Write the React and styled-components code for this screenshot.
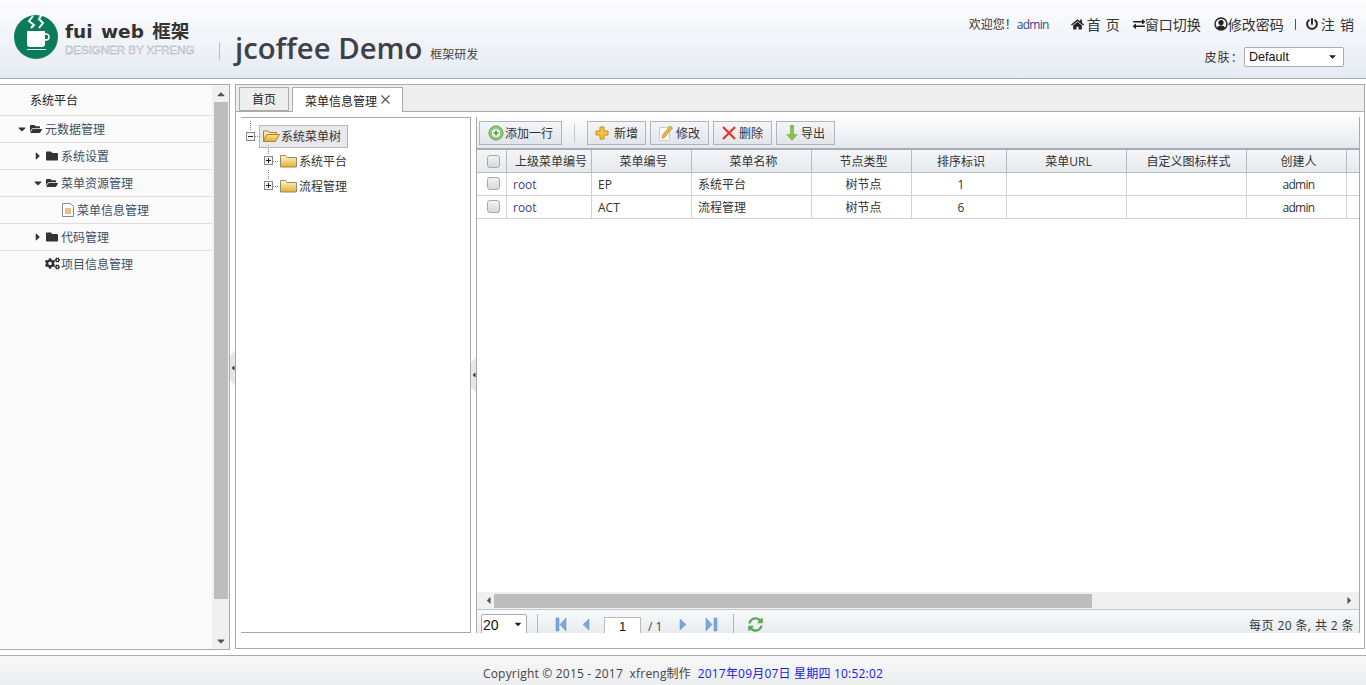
import React from "react";
import styled, { createGlobalStyle } from "styled-components";
import { FaHome, FaExchangeAlt, FaPowerOff, FaFolder, FaFolderOpen, FaCogs, FaCaretDown, FaCaretRight, FaCaretUp, FaCaretLeft, FaSyncAlt } from "react-icons/fa";

const columns = [
  { title: "上级菜单编号", width: 85, align: "left" },
  { title: "菜单编号", width: 100, align: "left" },
  { title: "菜单名称", width: 120, align: "left" },
  { title: "节点类型", width: 100, align: "center" },
  { title: "排序标识", width: 95, align: "center" },
  { title: "菜单URL", width: 120, align: "center" },
  { title: "自定义图标样式", width: 120, align: "center" },
  { title: "创建人", width: 100, align: "center" },
];

const rows = [
  ["root", "EP", "系统平台", "树节点", "1", "", "", "admin"],
  ["root", "ACT", "流程管理", "树节点", "6", "", "", "admin"],
];

const Logo = () => (
  <svg width="46" height="46" viewBox="0 0 46 46">
    <circle cx="22" cy="23" r="22" fill="#0b7c58" />
    <path d="M13 17h18v13a3 3 0 0 1-3 3H16a3 3 0 0 1-3-3Z" fill="#fff" />
    <circle cx="32" cy="23" r="3" fill="none" stroke="#fff" strokeWidth="1.5" />
    <path d="M13 35h19v1H13Z" fill="#dff" />
    <path d="M17 14l3-3-5-4 4-5M25 14l4-5-4-4 3-5" fill="none" stroke="#fff" strokeWidth="2" />
  </svg>
);

const UserRing = () => (
  <svg width="14" height="14" viewBox="0 0 14 14">
    <circle cx="7" cy="7" r="6" fill="none" stroke="#222" strokeWidth="1.4" />
    <circle cx="7" cy="5.600" r="2.600" fill="#222" />
    <path d="M2.800 11c1-2 2.400-2.600 4.200-2.600s3.200.6 4.200 2.600a6 6 0 0 1-8.400 0Z" fill="#222" />
  </svg>
);

const CloseMark = () => (
  <svg width="9" height="9" viewBox="0 0 9 9">
    <path d="M.5.5l8 8M8.500.5l-8 8" stroke="#555" strokeWidth="1.100" />
  </svg>
);

const DocIcon = () => (
  <svg width="12" height="14" viewBox="0 0 12 14">
    <path d="M.5.5h8l3 3v10H.5Z" fill="#fff" stroke="#888" />
    <path d="M3 6h6M3 8h6M3 10h6" stroke="#e07a10" />
  </svg>
);

const AddCircle = () => (
  <svg width="16" height="16" viewBox="0 0 16 16">
    <circle cx="8" cy="8" r="7" fill="#8ccb72" stroke="#5fa350" />
    <circle cx="8" cy="8" r="4" fill="#fff" />
    <path d="M8 5.500v5M5.500 8h5" stroke="#4f9c3f" strokeWidth="1.600" />
  </svg>
);

const PlusIcon = () => (
  <svg width="14" height="14" viewBox="0 0 14 14">
    <path d="M5 1h4v4h4v4H9v4H5V9H1V5h4Z" fill="#f6c33d" stroke="#c98a1a" />
  </svg>
);

const PencilIcon = () => (
  <svg width="14" height="16" viewBox="0 0 14 16">
    <path d="M.5 2.500h10v13H.5Z" fill="#fff" stroke="#ccc" />
    <path d="M11 1l2.500 2L6 12l-3 1.500L3.500 10Z" fill="#eeb54a" stroke="#b98426" strokeWidth=".7" />
  </svg>
);

const CrossIcon = () => (
  <svg width="14" height="14" viewBox="0 0 14 14">
    <path d="M1 1l12 12M13 1L1 13" stroke="#e2352a" strokeWidth="2.200" />
  </svg>
);

const DownIcon = () => (
  <svg width="12" height="16" viewBox="0 0 12 16">
    <path d="M4 0h4v9h4l-6 7-6-7h4Z" fill="#8cbc52" />
  </svg>
);

const YellowFolder = ({ open }) => (
  <svg width="17" height="14" viewBox="0 0 17 14">
    <defs>
      <linearGradient id="fold" x1="0" y1="0" x2="0" y2="1">
        <stop offset="0" stopColor="#fff6cc" />
        <stop offset="1" stopColor="#e8ad2c" />
      </linearGradient>
    </defs>
    {open ? (
      <path d="M.5 12.500V2h5l1 1.500h7v2H4L.5 12.500h12L16.500 5.500H4" fill="url(#fold)" stroke="#a8842f" />
    ) : (
      <path d="M.5 13V1.500h5l1.500 2h9.500V13Z" fill="url(#fold)" stroke="#8f8a70" />
    )}
  </svg>
);

const PagerGlyph = ({ kind }) => {
  const paths = {
    first: "M1 1h3v13H1ZM11 1v13L5 7.500Z",
    prev: "M9 2v11L3 7.500Z",
    next: "M4 2v11l6-5.500Z",
    last: "M1 1v13l6-6.500ZM9 1h3v13H9Z",
  };
  return (
    <svg width="13" height="15" viewBox="0 0 13 15">
      <path d={paths[kind]} fill="#7da5dc" stroke="#5f8ccb" strokeWidth=".5" />
    </svg>
  );
};

const App = () => {
  return (
    <Page>
      <GlobalStyle />
      <Header>
        <Brand>
          <LogoMark>
            <Logo />
          </LogoMark>
          <LogoWords>
            <LogoName>fui web 框架</LogoName>
            <LogoSlogan>DESIGNER BY XFRENG</LogoSlogan>
          </LogoWords>
          <BrandRule />
          <Title>jcoffee Demo</Title>
          <SubTitle>框架研发</SubTitle>
        </Brand>
        <UserBox>
          <UserLinks>
            <Welcome>
              欢迎您！<b>admin</b>
            </Welcome>
            <UserLink $left={22} $gap={3}><FaHome size={13} />首 页</UserLink>
            <UserLink $left={13} $gap={0}><FaExchangeAlt size={12} />窗口切换</UserLink>
            <UserLink $left={13} $gap={0}><UserRing />修改密码</UserLink>
            <Pipe />
            <UserLink $left={0} $gap={3}><FaPowerOff size={12} />注 销</UserLink>
          </UserLinks>
          <SkinRow>
            皮肤：
            <SelectBox $width={100}>
              <select defaultValue="Default">
                <option>Default</option>
              </select>
              <FaCaretDown size={11} />
            </SelectBox>
          </SkinRow>
        </UserBox>
      </Header>

      <Main>
        <Sidebar>
          <MenuList>
            <MenuRow $top $indent={30}>系统平台</MenuRow>
            <MenuRow $indent={16}><Caret><FaCaretDown size={12} /></Caret><FaFolderOpen size={12} />元数据管理</MenuRow>
            <MenuRow $indent={32}><Caret><FaCaretRight size={12} /></Caret><FaFolder size={12} />系统设置</MenuRow>
            <MenuRow $indent={32}><Caret><FaCaretDown size={12} /></Caret><FaFolderOpen size={12} />菜单资源管理</MenuRow>
            <MenuRow $indent={62}><DocIcon />菜单信息管理</MenuRow>
            <MenuRow $indent={32}><Caret><FaCaretRight size={12} /></Caret><FaFolder size={12} />代码管理</MenuRow>
            <MenuRow $indent={45} $plain><FaCogs size={15} />项目信息管理</MenuRow>
          </MenuList>
          <VScroll>
            <FaCaretUp size={12} />
            <VThumb />
            <FaCaretDown size={12} />
          </VScroll>
        </Sidebar>

        <Gutter>
          <Handle><FaCaretLeft size={8} /></Handle>
        </Gutter>

        <Content>
          <TabStrip>
            <Tab>首页</Tab>
            <Tab $active>菜单信息管理<CloseMark /></Tab>
          </TabStrip>
          <TabBody>
            <TreePanel>
              <TreeRoot>
                <Expander />
                <TreeSelected><YellowFolder open />系统菜单树</TreeSelected>
              </TreeRoot>
              <TreeNode><Expander $plus /><YellowFolder />系统平台</TreeNode>
              <TreeNode><Expander $plus /><YellowFolder />流程管理</TreeNode>
            </TreePanel>
            <SplitGap>
              <Handle><FaCaretLeft size={8} /></Handle>
            </SplitGap>
            <GridPanel>
              <Toolbar>
                <ToolButton $width={83} $gap={1}><AddCircle />添加一行</ToolButton>
                <ToolRule />
                <ToolButton $width={59} $gap={5}><PlusIcon />新增</ToolButton>
                <ToolButton $width={59}><PencilIcon />修改</ToolButton>
                <ToolButton $width={59}><CrossIcon />删除</ToolButton>
                <ToolButton $width={59}><DownIcon />导出</ToolButton>
              </Toolbar>
              <GridArea>
                <Table>
                  <colgroup>
                    <col style={{ width: 30 }} />
                    {columns.map((c) => (
                      <col key={c.title} style={{ width: c.width }} />
                    ))}
                    <col />
                  </colgroup>
                  <thead>
                    <tr>
                      <HeadCell $box><Check /></HeadCell>
                      {columns.map((c) => (
                        <HeadCell key={c.title}>{c.title}</HeadCell>
                      ))}
                      <HeadCell />
                    </tr>
                  </thead>
                  <tbody>
                    {rows.map((row) => (
                      <tr key={row[1]}>
                        <BodyCell $align="center" $box><Check /></BodyCell>
                        {row.map((value, i) => (
                          <BodyCell key={i} $align={columns[i].align} $link={i === 0} $tight={value === "admin"}>{value}</BodyCell>
                        ))}
                        <BodyCell />
                      </tr>
                    ))}
                  </tbody>
                </Table>
              </GridArea>
              <HScroll>
                <FaCaretLeft size={11} />
                <HTrack><HThumb /></HTrack>
                <FaCaretRight size={11} />
              </HScroll>
              <Pager>
                <SelectBox $width={46} $pager>
                  <select defaultValue="20">
                    <option>20</option>
                  </select>
                  <FaCaretDown size={10} />
                </SelectBox>
                <PagerRule />
                <PagerButton $left={7}><PagerGlyph kind="first" /></PagerButton>
                <PagerButton $left={12}><PagerGlyph kind="prev" /></PagerButton>
                <PageInput readOnly value="1" />
                <PageTotal>/ 1</PageTotal>
                <PagerButton $left={0}><PagerGlyph kind="next" /></PagerButton>
                <PagerButton $left={16}><PagerGlyph kind="last" /></PagerButton>
                <PagerRule $left={15} />
                <Refresh><FaSyncAlt size={15} /></Refresh>
                <PagerInfo>每页 20 条, 共 2 条</PagerInfo>
              </Pager>
            </GridPanel>
          </TabBody>
        </Content>
      </Main>

      <Footer>
        Copyright © 2015 - 2017&nbsp; xfreng制作&nbsp; <Clock>2017年09月07日 星期四 10:52:02</Clock>
      </Footer>
    </Page>
  );
};

export default App;

const fonts = `"Open Sans", "Noto Sans CJK SC", sans-serif`;

const GlobalStyle = createGlobalStyle`
  html, body {
    margin: 0;
    padding: 0;
    height: 100%;
    overflow: hidden;
    background: #fff;
  }
  * {
    box-sizing: border-box;
  }
`;

const Page = styled.div`
  display: flex;
  flex-direction: column;
  height: 685px;
  font-family: ${fonts};
  font-size: 12px;
  color: #444;
`;

const Header = styled.header`
  display: flex;
  justify-content: space-between;
  flex: 0 0 79px;
  border-bottom: 1px solid #aaa;
  background: linear-gradient(#fcfcfd, #e6ebf3);
`;

const Brand = styled.div`
  display: flex;
  align-items: flex-start;
  padding: 14px 0 0 14px;
`;

const LogoMark = styled.div`
  width: 46px;
  height: 46px;
`;

const LogoWords = styled.div`
  display: flex;
  flex-direction: column;
  margin: 6px 0 0 5px;
  width: 130px;
`;

const LogoName = styled.div`
  font-family: "DejaVu Sans", "Noto Sans CJK SC", sans-serif;
  font-size: 18.500px;
  line-height: 24px;
  font-weight: 700;
  color: #333;
  white-space: nowrap;
  word-spacing: 2px;
`;

const LogoSlogan = styled.div`
  font-family: "Liberation Sans", sans-serif;
  font-size: 11.500px;
  line-height: 12px;
  color: #f2f3f6;
  -webkit-text-stroke: 0.4px #a0a0a0;
  white-space: nowrap;
`;

const BrandRule = styled.div`
  width: 1px;
  height: 18px;
  margin: 28px 15px 0 24px;
  background: #bbb;
`;

const Title = styled.div`
  font-size: 29.300px;
  line-height: 40px;
  font-weight: 600;
  color: #404048;
  margin-top: 14px;
  white-space: nowrap;
`;

const SubTitle = styled.div`
  font-size: 12px;
  line-height: 16px;
  margin: 33px 0 0 8px;
  color: #444;
  white-space: nowrap;
`;

const UserBox = styled.div`
  display: flex;
  flex-direction: column;
  align-items: flex-end;
  padding: 14px 12px 0 0;
`;

const UserLinks = styled.div`
  display: flex;
  align-items: center;
  height: 20px;
`;

const Welcome = styled.span`
  font-size: 12px;
  color: #333;

  b {
    font-weight: 400;
    letter-spacing: -0.7px;
    color: #33468a;
  }
`;

const UserLink = styled.span`
  display: inline-flex;
  align-items: center;
  gap: ${(p) => p.$gap}px;
  margin-left: ${(p) => p.$left}px;
  font-size: 14px;
  word-spacing: 1.500px;
  color: #333;
  svg {
    color: #222;
    flex: none;
  }
`;

const Pipe = styled.span`
  width: 1px;
  height: 11px;
  margin: 0 10px 0 11px;
  background: #8a2a7a;
`;

const SkinRow = styled.div`
  display: flex;
  align-items: center;
  margin: 13px 10px 0 0;
  height: 20px;
  color: #333;
  font-size: 12px;
  letter-spacing: 1.200px;
`;

const SelectBox = styled.div`
  position: relative;
  width: ${(p) => p.$width}px;
  height: ${(p) => (p.$pager ? 30 : 20)}px;
  flex: none;
  letter-spacing: 0;

  select {
    appearance: none;
    width: 100%;
    height: 100%;
    padding: ${(p) => (p.$pager ? "0 0 8px 1px" : "0 0 0 4px")};
    border: 1px solid #aaa;
    border-radius: 2px;
    background: #fff;
    font-family: "Liberation Sans", sans-serif;
    font-size: ${(p) => (p.$pager ? 14 : 12.6)}px;
    color: #111;
    outline: none;
  }

  svg {
    position: absolute;
    right: ${(p) => (p.$pager ? 4 : 6)}px;
    top: ${(p) => (p.$pager ? 5 : 4)}px;
    color: #222;
  }
`;

const Main = styled.main`
  display: flex;
  flex: 1;
  min-height: 0;
  margin: 5px 0 5px;
`;

const Sidebar = styled.aside`
  display: flex;
  flex: 0 0 230px;
  border-top: 1px solid #aaa;
  border-right: 1px solid #aaa;
  border-bottom: 1px solid #aaa;
  background: #fafafa;
`;

const MenuList = styled.nav`
  flex: 1;
`;

const MenuRow = styled.div`
  display: flex;
  align-items: center;
  gap: ${(p) => (p.$plain ? 1 : 3)}px;
  height: ${(p) => (p.$top ? 31 : 27)}px;
  padding-left: ${(p) => p.$indent}px;
  padding-bottom: ${(p) => (p.$plain ? 2 : 0)}px;
  border-bottom: ${(p) => (p.$plain ? "none" : "1px solid #ddd")};
  color: ${(p) => (p.$top ? "#222" : "#3d4f63")};
  svg {
    color: #333;
    flex: none;
  }
`;

const Caret = styled.span`
  display: inline-flex;
  width: 11px;
`;

const VScroll = styled.div`
  display: flex;
  flex-direction: column;
  align-items: center;
  justify-content: space-between;
  flex: 0 0 17px;
  padding: 3px 0 2px;
  background: #f0f0f0;
  svg {
    color: #555;
    flex: none;
  }
`;

const VThumb = styled.div`
  width: 14px;
  flex: 1;
  margin: 2px 0 36px;
  background: #bdbdbd;
`;

const Gutter = styled.div`
  position: relative;
  flex: 0 0 5px;
`;

const Handle = styled.div`
  position: absolute;
  top: 266px;
  left: 0;
  display: flex;
  align-items: center;
  justify-content: center;
  width: 5px;
  height: 36px;
  background: #e6e6e6;
  clip-path: polygon(0 6px, 100% 0, 100% 100%, 0 30px);
  svg {
    color: #333;
    flex: none;
  }
`;

const Content = styled.section`
  display: flex;
  flex-direction: column;
  flex: 1;
  min-width: 0;
  margin-right: 1px;
  margin-bottom: 1px;
  border: 1px solid #aaa;
  background: #fff;
`;

const TabStrip = styled.div`
  display: flex;
  align-items: flex-end;
  flex: 0 0 27px;
  gap: 3px;
  padding-left: 3px;
  border-bottom: 1px solid #aaa;
  background: #eee;
`;

const Tab = styled.div`
  display: flex;
  align-items: ${(p) => (p.$active ? "flex-start" : "center")};
  justify-content: center;
  gap: 4px;
  width: ${(p) => (p.$active ? 111 : 50)}px;
  height: ${(p) => (p.$active ? 25 : 24)}px;
  padding-top: ${(p) => (p.$active ? 5 : 1)}px;
  margin-bottom: ${(p) => (p.$active ? -1 : 0)}px;
  border: 1px solid #aaa;
  border-bottom: ${(p) => (p.$active ? "none" : "1px solid #aaa")};
  background: ${(p) => (p.$active ? "#fff" : "#eee")};
  color: #222;
  line-height: 18px;
  svg {
    margin-top: 2px;
  }
`;

const TabBody = styled.div`
  display: flex;
  flex: 1;
  min-height: 0;
  padding: 5px 4px 15px 5px;
`;

const TreePanel = styled.div`
  flex: 0 0 230px;
  padding-top: 6px;
  border-top: 1px solid #aaa;
  border-right: 1px solid #aaa;
  border-bottom: 1px solid #aaa;
  background: #fff;
  color: #333;
`;

const Dots = `
  position: relative;

  &::before {
    content: "";
    position: absolute;
    top: -3px;
    height: 9px;
    border-left: 1px dotted #888;
  }
  &::after {
    content: "";
    position: absolute;
    top: 50%;
    width: 5px;
    border-top: 1px dotted #888;
  }
`;

const TreeRoot = styled.div`
  ${Dots}
  display: flex;
  align-items: center;
  gap: 4px;
  height: 24px;
  padding-left: 5px;

  &::before {
    left: 9px;
  }
  &::after {
    left: 14px;
  }
`;

const TreeSelected = styled.div`
  display: flex;
  align-items: center;
  gap: 1px;
  width: 89px;
  height: 23px;
  padding-left: 3px;
  border: 1px solid #b3b6bc;
  background: #e8e9ec;
`;

const TreeNode = styled.div`
  ${Dots}
  display: flex;
  align-items: center;
  gap: 2px;
  height: 25px;
  padding-left: 23px;

  &::before {
    left: 27px;
  }
  &::after {
    left: 32px;
  }
`;

const Expander = styled.span`
  position: relative;
  display: inline-block;
  flex: none;
  width: 9px;
  height: 9px;
  margin-right: ${(p) => (p.$plus ? 5 : 0)}px;
  border: 1px solid #888;
  background: #f4f4f4;

  &::before {
    content: "";
    position: absolute;
    left: 1px;
    top: 3px;
    width: 5px;
    height: 1px;
    background: #222;
  }
  &::after {
    content: "";
    display: ${(p) => (p.$plus ? "block" : "none")};
    position: absolute;
    left: 3px;
    top: 1px;
    width: 1px;
    height: 5px;
    background: #222;
  }
`;

const SplitGap = styled.div`
  position: relative;
  flex: 0 0 5px;

  ${Handle} {
    top: 240px;
  }
`;

const GridPanel = styled.div`
  display: flex;
  flex-direction: column;
  flex: 1;
  min-width: 0;
  overflow: hidden;
  border-left: 1px solid #aaa;
  border-right: 1px solid #aaa;
`;

const Toolbar = styled.div`
  display: flex;
  align-items: center;
  gap: 4px;
  flex: 0 0 33px;
  padding: 1px 0 0 2px;
  border-bottom: 2px solid #a8adb5;
  background: linear-gradient(#fdfdfd, #e4e7ed);
`;

const ToolButton = styled.div`
  display: flex;
  align-items: center;
  justify-content: center;
  gap: ${(p) => p.$gap ?? 3}px;
  width: ${(p) => p.$width}px;
  height: 24px;
  border: 1px solid #b1b4ba;
  background: linear-gradient(#f4f5f7, #e1e4ea);
  color: #333;
`;

const ToolRule = styled.div`
  width: 1px;
  height: 18px;
  margin: 0 8px;
  background: #c4c6ca;
`;

const GridArea = styled.div`
  flex: 1;
  min-height: 0;
  background: #fff;
`;

const Table = styled.table`
  width: 100%;
  table-layout: fixed;
  border-collapse: separate;
  border-spacing: 0;
`;

const HeadCell = styled.th`
  height: 23px;
  padding: ${(p) => (p.$box ? "2px 0 0" : "0 0 0 4px")};
  border-right: 1px solid #b5b9c0;
  border-bottom: 1px solid #b5b9c0;
  background: linear-gradient(#f4f5f7, #e6e9ee);
  font-weight: 400;
  font-size: 12px;
  color: #333;
  text-align: center;
  white-space: nowrap;
  &:last-child {
    border-right: none;
  }
`;

const BodyCell = styled.td`
  height: 23px;
  padding: ${(p) => (p.$box ? "0" : p.$align === "left" ? "0 0 0 6px" : "0 0 0 4px")};
  border-right: 1px solid #d2d2d2;
  border-bottom: 1px solid #d2d2d2;
  text-align: ${(p) => p.$align};
  color: ${(p) => (p.$link ? "#3b3f86" : "#333")};
  font-size: 12px;
  letter-spacing: ${(p) => (p.$tight ? "-0.7px" : "0")};
  &:last-child {
    border-right: none;
  }
`;

const Check = styled.span`
  display: inline-block;
  width: 13px;
  height: 13px;
  margin: 0 0 3px 4px;
  vertical-align: middle;
  border: 1px solid #a8a8a8;
  border-radius: 3px;
  background: linear-gradient(#f3f3f3, #d8d8d8);
`;

const HScroll = styled.div`
  display: flex;
  align-items: center;
  flex: 0 0 18px;
  padding: 0 4px 0 6px;
  border-bottom: 1px solid #c4c4c4;
  background: #f0f0f0;
  svg {
    color: #555;
    flex: none;
  }
`;

const HTrack = styled.div`
  flex: 1;
  padding: 0 252px 0 0;
`;

const HThumb = styled.div`
  height: 14px;
  background: #bdbdbd;
`;

const Pager = styled.div`
  display: flex;
  align-items: flex-start;
  flex: 0 0 23px;
  overflow: hidden;
  padding: 4px 5px 0 4px;
  background: linear-gradient(#f8fafb, #e8ecef);
`;

const PagerRule = styled.div`
  flex: none;
  width: 1px;
  height: 20px;
  margin: 0 10px 0 ${(p) => p.$left ?? 10}px;
  background: #b4b8bd;
`;

const PagerButton = styled.div`
  flex: none;
  display: flex;
  width: 13px;
  margin-left: ${(p) => p.$left}px;
  padding-top: 3px;
`;

const PageInput = styled.input`
  flex: none;
  width: 37px;
  height: 24px;
  margin: 3px 0 0 11px;
  padding: 0 0 5px;
  border: 1px solid #bbb;
  background: #fff;
  text-align: center;
  font-family: "Liberation Sans", sans-serif;
  font-size: 13px;
  color: #111;
`;

const PageTotal = styled.span`
  flex: none;
  width: 28px;
  margin: 7px 0 0 7px;
  font-size: 12px;
  line-height: 12px;
  color: #444;
`;

const Refresh = styled.div`
  margin: 3px 0 0 4px;
  color: #5ba85a;
`;

const PagerInfo = styled.div`
  margin: 2px 0 0 auto;
  font-size: 12px;
  letter-spacing: 0.400px;
  color: #333;
`;

const Footer = styled.footer`
  display: flex;
  align-items: center;
  justify-content: center;
  flex: 0 0 30px;
  padding-top: 5px;
  white-space: pre;
  letter-spacing: 0.200px;
  border-top: 1px solid #aaa;
  background: linear-gradient(#f8f8f8, #ecedef);
  color: #444;
`;

const Clock = styled.span`
  color: #1a1ae0;
`;
